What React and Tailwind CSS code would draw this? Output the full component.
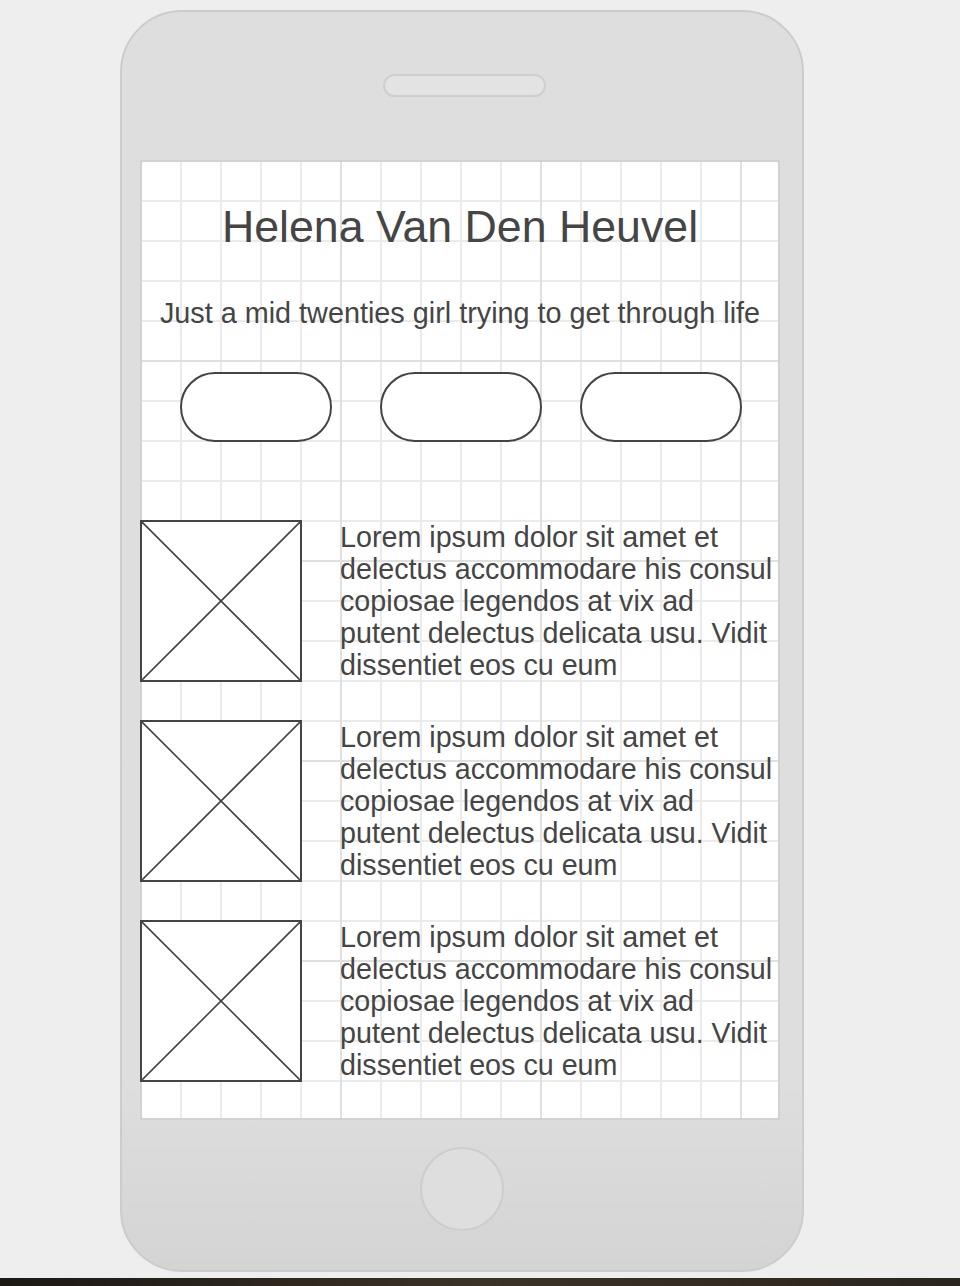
const posts = [1, 2, 3];

const lorem =
    'Lorem ipsum dolor sit amet et delectus accommodare his consul copiosae legendos at vix ad putent delectus delicata usu. Vidit dissentiet eos cu eum';

const ImagePlaceholder = () => (
    <div className="-ml-[2px] w-[162px] h-[162px] shrink-0 border-2 border-[#444444] bg-white">
        <svg viewBox="0 0 158 158" className="w-full h-full block" preserveAspectRatio="none">
            <line x1="0" y1="0" x2="158" y2="158" stroke="#444444" strokeWidth="1.6" />
            <line x1="158" y1="0" x2="0" y2="158" stroke="#444444" strokeWidth="1.6" />
        </svg>
    </div>
);

const App = () => {
    return (
        <div className="w-[960px] h-[1286px] bg-[#eeeeee] flex flex-col font-['Liberation_Sans',Arial,sans-serif] text-[#454545] overflow-hidden">
            {/* Phone body */}
            <div className="mt-[10px] ml-[120px] w-[684px] h-[1262px] shrink-0 rounded-[62px] border-2 border-[#cccccc] bg-gradient-to-b from-[#dedede] via-[#dedede] via-85% to-[#d4d4d4] flex flex-col">
                {/* Speaker */}
                <div className="mt-[62px] ml-[261px] w-[163px] h-[23px] rounded-full border-2 border-[#cfcfcf] bg-[#e3e3e3]" />

                {/* Screen */}
                <div className="mt-[63px] ml-[18px] w-[640px] h-[960px] border-2 border-[#d2d2d2] bg-white bg-[image:linear-gradient(to_right,#e0e0e0_2px,transparent_2px),linear-gradient(to_bottom,#e0e0e0_2px,transparent_2px),linear-gradient(to_right,#ebebeb_2px,transparent_2px),linear-gradient(to_bottom,#ebebeb_2px,transparent_2px)] bg-[size:200px_200px,200px_200px,40px_40px,40px_40px] bg-[position:-2px_-2px] flex flex-col">
                    <h1 className="mt-[41px] text-center text-[44.7px] leading-[48px] font-normal">Helena Van Den Heuvel</h1>
                    <p className="mt-[46px] text-center text-[28.8px] leading-[32px] whitespace-nowrap">
                        Just a mid twenties girl trying to get through life
                    </p>

                    {/* Link pills */}
                    <div className="mt-[43px] flex">
                        <div className="ml-[38px] w-[152px] h-[70px] rounded-[35px] border-2 border-[#444444] bg-white" />
                        <div className="ml-[48px] w-[162px] h-[70px] rounded-[35px] border-2 border-[#444444] bg-white" />
                        <div className="ml-[38px] w-[162px] h-[70px] rounded-[35px] border-2 border-[#444444] bg-white" />
                    </div>

                    {/* Posts */}
                    <div className="mt-[78px] flex flex-col gap-[38px]">
                        {posts.map((p) => (
                            <div key={p} className="flex">
                                <ImagePlaceholder />
                                <p className="ml-[38px] w-[440px] text-[28.7px] leading-[32px] mt-[1px]">{lorem}</p>
                            </div>
                        ))}
                    </div>
                </div>

                {/* Home button */}
                <div className="mt-[27px] ml-[298px] w-[84px] h-[84px] rounded-full border-2 border-[#cdcdcd] bg-[#dedede]" />
            </div>

            {/* dark strip at bottom edge */}
            <div className="mt-[6px] h-[8px] shrink-0 bg-gradient-to-r from-[#1c1812] via-[#3a3328] to-[#2a251d]" />
        </div>
    );
};

export default App;
